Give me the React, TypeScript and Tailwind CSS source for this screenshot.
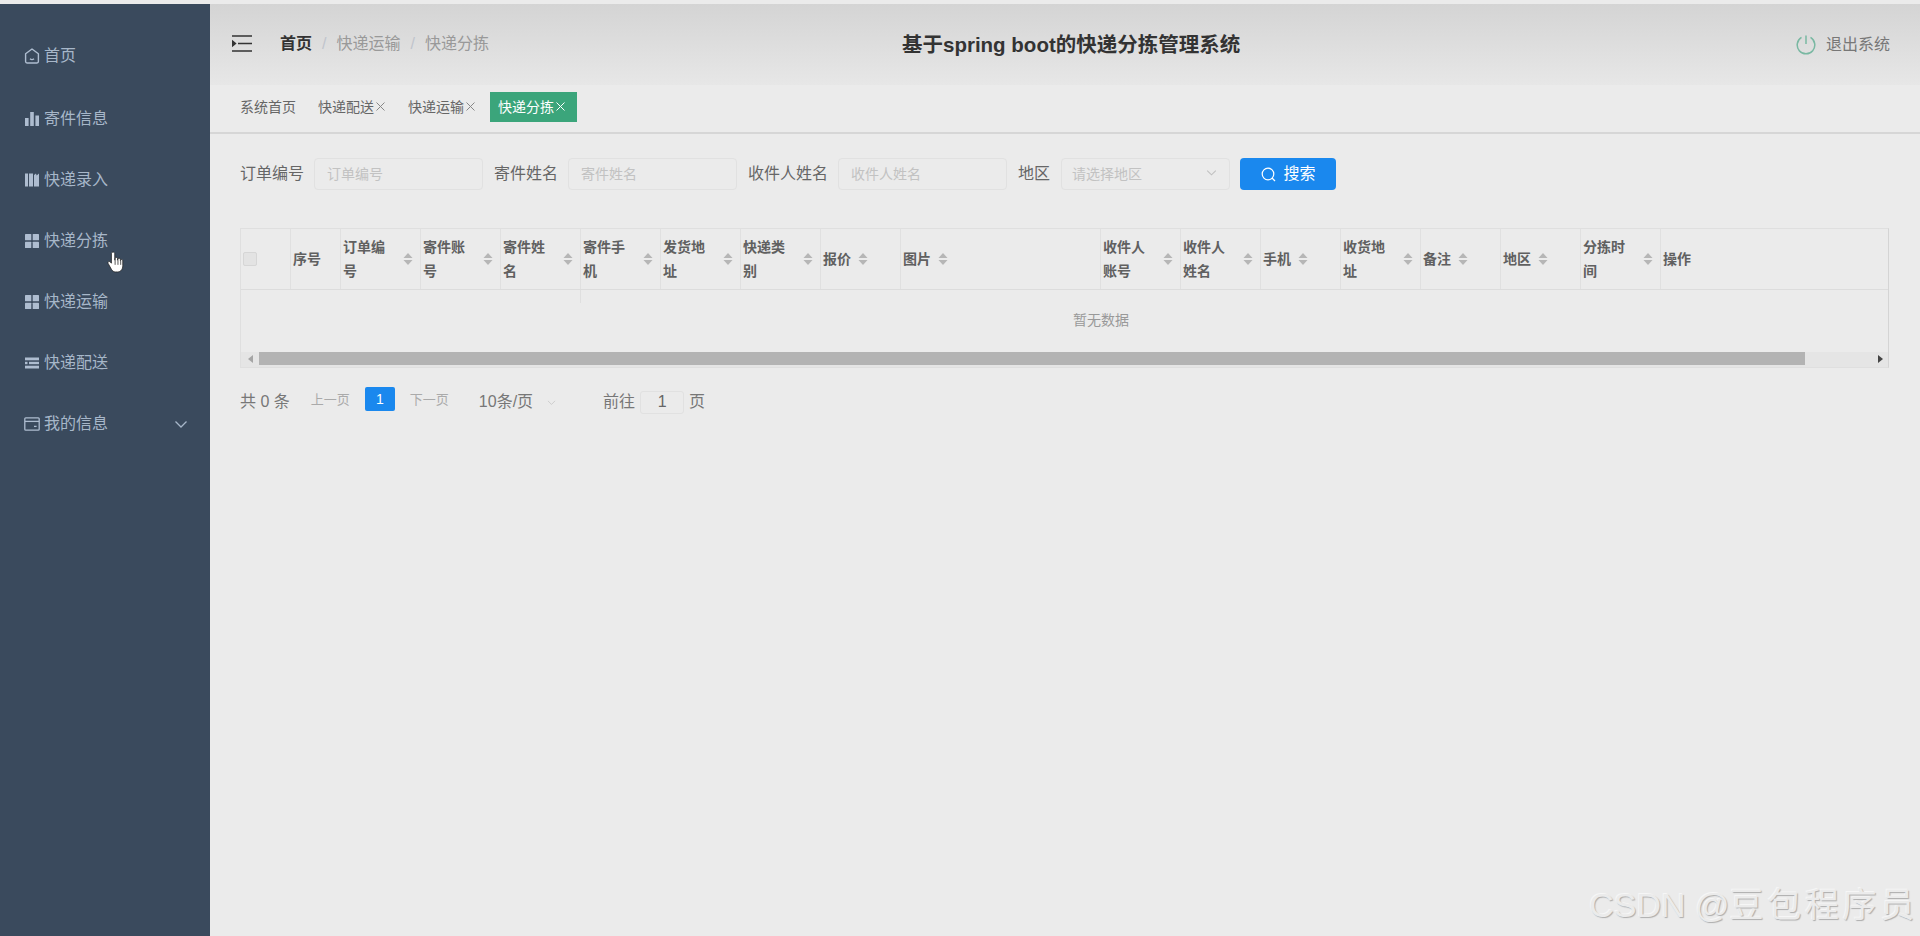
import React from "react";

const sideColor = "#aebdd0";

const HomeIcon = () => (
  <svg width="16" height="16" viewBox="0 0 16 16" fill="none" stroke={sideColor} strokeWidth="1.4">
    <path d="M8 1 L14.4 5.8 V13.6 Q14.4 15 13 15 H3 Q1.6 15 1.6 13.6 V5.8 Z" strokeLinejoin="round" />
    <path d="M6 10.8 Q8 12.4 10 10.8" />
  </svg>
);

const BarsIcon = () => (
  <svg width="16" height="16" viewBox="0 0 16 16" fill={sideColor}>
    <rect x="1" y="7" width="3.6" height="8" />
    <rect x="6.2" y="1" width="3.6" height="14" />
    <rect x="11.4" y="4.5" width="3.6" height="10.5" />
  </svg>
);

const BooksIcon = () => (
  <svg width="16" height="16" viewBox="0 0 16 16" fill={sideColor}>
    <rect x="1" y="1.5" width="3" height="13" />
    <rect x="5" y="1.5" width="4" height="13" />
    <path d="M10 3 L12 1.5 L12.6 3.5 L15 1.5 V14.5 H10 Z" />
  </svg>
);

const GridIcon = () => (
  <svg width="16" height="16" viewBox="0 0 16 16" fill={sideColor}>
    <rect x="1" y="1" width="6.3" height="6.3" rx="0.6" />
    <rect x="8.7" y="1" width="6.3" height="6.3" rx="0.6" />
    <rect x="1" y="8.7" width="6.3" height="6.3" rx="0.6" />
    <rect x="8.7" y="8.7" width="6.3" height="6.3" rx="0.6" />
  </svg>
);

const OperationIcon = () => (
  <svg width="16" height="16" viewBox="0 0 16 16" fill={sideColor}>
    <rect x="1" y="2.5" width="14" height="2.8" />
    <rect x="1" y="6.8" width="2.5" height="2.4" />
    <rect x="5" y="6.8" width="10" height="2.4" />
    <rect x="1" y="10.7" width="14" height="2.8" />
  </svg>
);

const WalletIcon = () => (
  <svg width="16" height="16" viewBox="0 0 16 16" fill="none" stroke={sideColor} strokeWidth="1.3">
    <rect x="0.8" y="1.8" width="14.4" height="12.4" rx="1" />
    <path d="M1 5.4 H15" />
    <path d="M10 10.4 H12.6" />
  </svg>
);

const Chevron = ({ size, color }: { size: number; color: string }) => (
  <svg width={size} height={size} viewBox="0 0 14 14" fill="none" stroke={color} strokeWidth="1.3">
    <path d="M1.5 4.5 L7 10 L12.5 4.5" />
  </svg>
);

const menu = [
  { label: "首页", icon: <HomeIcon /> },
  { label: "寄件信息", icon: <BarsIcon /> },
  { label: "快递录入", icon: <BooksIcon /> },
  { label: "快递分拣", icon: <GridIcon /> },
  { label: "快递运输", icon: <GridIcon /> },
  { label: "快递配送", icon: <OperationIcon /> },
  { label: "我的信息", icon: <WalletIcon />, arrow: true },
];

const Sidebar = () => (
  <aside className="w-[210px] shrink-0 bg-[#3a4a5d] pt-[20px]">
    {menu.map((m) => (
      <div
        key={m.label}
        className="flex h-[61px] items-center gap-[4px] pl-6 text-base text-[#a7b7c9] first:h-[64px]"
      >
        {m.icon}
        <span>{m.label}</span>
        {m.arrow && (
          <span className="ml-auto mr-[22px] flex">
            <Chevron size={14} color="#a7b7c9" />
          </span>
        )}
      </div>
    ))}
  </aside>
);

const Header = () => (
  <header className="flex h-[81px] items-center bg-linear-to-b from-[#d4d4d4] to-[#e7e7e7] pl-[22px] pr-[30px]">
    <div className="-mt-[2px] flex w-[670px] items-center">
      <svg width="20" height="17" viewBox="0 0 20 17" fill="none" stroke="#333" strokeWidth="1.4" className="mr-[28px]">
        <path d="M0 1 H20 M6 8.5 H20 M0 16 H20" />
        <path d="M0.5 6 L3.5 8.5 L0.5 11 Z" fill="#333" />
      </svg>
      <span className="font-bold text-[#333]">首页</span>
      <span className="mx-[10px] text-[#c0c4cc]">/</span>
      <span className="text-[#999]">快递运输</span>
      <span className="mx-[10px] text-[#c0c4cc]">/</span>
      <span className="text-[#999]">快递分拣</span>
    </div>
    <h1 className="mt-px text-[20.5px] font-bold text-[#333]">基于spring boot的快递分拣管理系统</h1>
    <div className="ml-auto flex items-center gap-[10px] text-base text-[#777]">
      <svg width="20" height="20" viewBox="0 0 20 20" fill="none" stroke="#79b8a2" strokeWidth="1.5">
        <path d="M5.5 2.4 A8.8 8.8 0 1 0 14.5 2.4" />
        <path d="M10 0.5 V9" />
      </svg>
      <span>退出系统</span>
    </div>
  </header>
);

const tabs = [
  { label: "系统首页" },
  { label: "快递配送", close: true },
  { label: "快递运输", close: true },
  { label: "快递分拣", close: true, active: true },
];

const TabBar = () => (
  <div className="flex h-[49px] items-center gap-[6px] border-b-2 border-[#d6d6d6] bg-[#ebebeb] pb-[4px] pl-[22px]">
    {tabs.map((t) => (
      <div
        key={t.label}
        className={
          t.active
            ? "flex h-[30px] items-center bg-[#3ba57b] pl-2 pr-[11px] text-sm text-white"
            : "flex h-[30px] items-center px-2 text-sm text-[#666]"
        }
      >
        <span>{t.label}</span>
        {t.close && (
          <svg
            width="11"
            height="11"
            viewBox="0 0 11 11"
            fill="none"
            stroke={t.active ? "#fff" : "#888"}
            strokeWidth="1"
            className="ml-px"
          >
            <path d="M1.5 1.5 L9.5 9.5 M9.5 1.5 L1.5 9.5" />
          </svg>
        )}
      </div>
    ))}
  </div>
);

const SearchField = ({ label, placeholder }: { label: string; placeholder: string }) => (
  <div className="mr-[11px] flex items-center gap-[10px]">
    <label className="text-base text-[#666]">{label}</label>
    <input
      readOnly
      placeholder={placeholder}
      className="h-[32px] w-[169px] rounded border border-[#e1e1e1] bg-[#ebebeb] pl-[12px] text-sm placeholder:text-[#c2c2c2]"
    />
  </div>
);

const SearchBar = () => (
  <div className="flex items-center">
    <SearchField label="订单编号" placeholder="订单编号" />
    <SearchField label="寄件姓名" placeholder="寄件姓名" />
    <SearchField label="收件人姓名" placeholder="收件人姓名" />
    <div className="mr-[10px] flex items-center gap-[11px]">
      <label className="text-base text-[#666]">地区</label>
      <div className="flex h-[32px] w-[169px] items-center rounded border border-[#e1e1e1] bg-[#ebebeb] pl-[10px] pr-[12px] text-sm text-[#c2c2c2]">
        <span>请选择地区</span>
        <span className="ml-auto -mt-[4px] flex">
          <Chevron size={11} color="#c0c0c0" />
        </span>
      </div>
    </div>
    <button className="flex h-[32px] w-[96px] items-center justify-center gap-[8px] rounded bg-[#1a88ee] text-base text-white">
      <svg width="15" height="15" viewBox="0 0 15 15" fill="none" stroke="#fff" strokeWidth="1.2">
        <circle cx="7" cy="7" r="5.8" />
        <path d="M11 11 L14 14" />
      </svg>
      <span>搜索</span>
    </button>
  </div>
);

const columns = [
  { label: "序号", w: 50, plain: true },
  { label: "订单编号", w: 80 },
  { label: "寄件账号", w: 80 },
  { label: "寄件姓名", w: 80 },
  { label: "寄件手机", w: 80 },
  { label: "发货地址", w: 80 },
  { label: "快递类别", w: 80 },
  { label: "报价", w: 80 },
  { label: "图片", w: 200 },
  { label: "收件人账号", w: 80 },
  { label: "收件人姓名", w: 80 },
  { label: "手机", w: 80 },
  { label: "收货地址", w: 80 },
  { label: "备注", w: 80 },
  { label: "地区", w: 80 },
  { label: "分拣时间", w: 80 },
  { label: "操作", w: 300, plain: true },
];

const SortCaret = ({ className }: { className: string }) => (
  <svg width="10" height="14" viewBox="0 0 10 14" fill="#b6b6b6" className={className}>
    <polygon points="5,1 9.5,6 0.5,6" />
    <polygon points="0.5,8 9.5,8 5,13" />
  </svg>
);

const DataTable = () => (
  <div className="mt-[38px] mr-[31px] border border-[#dfdfdf] border-r-[#d4d4d4]">
    <div className="overflow-hidden">
      <div className="w-[1720px]">
        <div className="flex h-[61px] border-b border-[#dcdcdc] text-sm font-bold leading-6 text-[#606060]">
          <div className="flex w-[50px] items-center border-r border-[#e0e0e0] pl-[2px]">
            <span className="h-[14px] w-[14px] rounded-[2px] border border-[#d6d6d6] bg-[#e3e3e3]" />
          </div>
          {columns.map((c) => (
            <div
              key={c.label}
              style={{ width: c.w }}
              className="flex shrink-0 items-center border-r border-[#e0e0e0] pl-[2px]"
            >
              {c.label.length > 2 ? (
                <>
                  <span className="w-[50px]">{c.label}</span>
                  <SortCaret className="ml-[10px] shrink-0" />
                </>
              ) : (
                <>
                  <span>{c.label}</span>
                  {!c.plain && <SortCaret className="ml-[7px] shrink-0" />}
                </>
              )}
            </div>
          ))}
        </div>
        <div className="relative flex h-[62px] items-center justify-center pb-[2px] text-sm text-[#999]">
          <span className="absolute left-[339px] top-0 h-[13px] w-px bg-[#dfdfdf]" />
          <span>暂无数据</span>
        </div>
      </div>
    </div>
    <div className="flex h-[15px] bg-[#e5e5e5]">
      <div className="flex w-[18px] items-center justify-center pb-[2px]">
        <span className="h-0 w-0 border-y-[4px] border-r-[5px] border-y-transparent border-r-[#a5a5a5]" />
      </div>
      <div className="h-[13px] w-[1546px] bg-[#b3b3b3]" />
      <div className="flex flex-1 items-center justify-end pb-[2px] pr-[5px]">
        <span className="h-0 w-0 border-y-[4px] border-l-[5px] border-y-transparent border-l-[#444]" />
      </div>
    </div>
  </div>
);

const Pagination = () => (
  <div className="mt-[21px] flex h-[26px] items-center text-base text-[#777]">
    <span className="mr-[21px]">共 0 条</span>
    <span className="mb-1 mr-[15px] text-[13px] text-[#aaa]">上一页</span>
    <span className="mb-[6px] mr-[15px] flex h-[24px] w-[30px] items-center justify-center rounded-[2px] bg-[#1a88ee] text-sm text-white">
      1
    </span>
    <span className="mb-1 mr-[30px] text-[13px] text-[#aaa]">下一页</span>
    <span>10条/页</span>
    <span className="ml-[14px] mr-[47px] flex">
      <Chevron size={9} color="#c8c8c8" />
    </span>
    <span>前往</span>
    <span className="mx-[5px] flex h-[23px] w-[44px] items-center justify-center rounded-[3px] border border-[#e1e1e1] text-base text-[#666]">
      1
    </span>
    <span>页</span>
  </div>
);

const HandCursor = () => (
  <svg
    width="17"
    height="24"
    viewBox="0 0 18 24"
    fill="#fff"
    stroke="#222"
    strokeWidth="0.8"
    className="absolute left-[107px] top-[250px]"
  >
    <path d="M6.5 1.5c1 0 1.7.8 1.7 1.8V10h.4V8.5c0-1.8 2.6-1.8 2.6 0V10h.4V9.2c0-1.7 2.5-1.7 2.5 0V10.5h.3c0-1.5 2.3-1.5 2.3.1V16c0 3.5-2 6.5-5.5 6.5H9c-2 0-3.2-1-4.3-2.7L1.2 13.5c-.8-1.4 1-2.8 2.2-1.6l1.3 1.4V3.3c0-1 .8-1.8 1.8-1.8z" />
    <path d="M8.6 10v5M11.6 10v5M14.5 10.5v4.5" />
  </svg>
);

export default function App() {
  return (
    <div className="relative flex h-[936px] w-full overflow-hidden bg-[#ebebeb] pt-1 font-['Liberation_Sans','Noto_Sans_CJK_SC',sans-serif]">
      <Sidebar />
      <main className="flex min-w-0 flex-1 flex-col">
        <Header />
        <TabBar />
        <section className="pl-[30px] pt-[24px]">
          <SearchBar />
          <DataTable />
          <Pagination />
        </section>
      </main>
      <HandCursor />
      <div className="absolute bottom-[14px] right-[2px] flex items-baseline text-[34px] leading-none text-[#ebebeb] [text-shadow:1px_1px_1px_#adadad,-1px_-1px_0_#f6f6f6]">
        <span>CSDN @</span>
        <span className="tracking-[3.7px]">豆包程序员</span>
      </div>
    </div>
  );
}
